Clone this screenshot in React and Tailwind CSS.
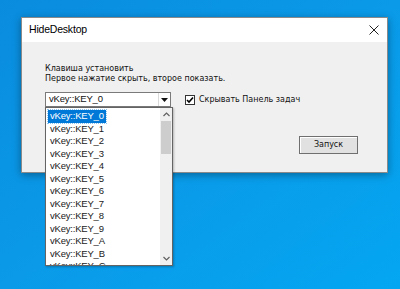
import React from 'react';

const KEYS = ['0', '1', '2', '3', '4', '5', '6', '7', '8', '9', 'A', 'B', 'C'];

function Chevron({ down }) {
  return (
    <svg width="7" height="5" viewBox="0 0 7 5" className={down ? 'rotate-180' : ''}>
      <path d="M0.5 4 L3.5 1 L6.5 4" fill="none" stroke="#606060" strokeWidth="1.2" />
    </svg>
  );
}

function KeyList() {
  return (
    <div className="absolute left-[45px] top-[107px] w-[128px] h-[159px] bg-white border border-[#646464] shadow-[1px_1px_2px_rgba(0,0,0,0.25)] flex overflow-hidden">
      <div className="flex-1 pt-[2px] pl-[2px] overflow-hidden">
        {KEYS.map((k, i) => (
          <div
            key={k}
            className={`h-[12.5px] leading-[12.5px] pl-[2px] text-[9.5px] tracking-[-0.2px] w-max pr-[2px] ${
              i === 0 ? 'bg-[#0078d7] text-white outline-1 outline-dotted outline-[#8cc4f0]' : 'text-[#1a1a1a]'
            }`}
          >
            vKey::KEY_{k}
          </div>
        ))}
      </div>
      <div className="w-[12px] bg-[#f0f0f0] flex flex-col items-center">
        <div className="h-[13px] flex items-center justify-center">
          <Chevron />
        </div>
        <div className="w-[10px] h-[33px] bg-[#cdcdcd]" />
        <div className="flex-1" />
        <div className="h-[13px] flex items-center justify-center">
          <Chevron down />
        </div>
      </div>
    </div>
  );
}

export default function App() {
  return (
    <div
      className="relative w-[400px] h-[289px] overflow-hidden bg-gradient-to-br from-[#0a8cde] via-[#0a9ae8] to-[#04a6f2]"
      style={{ fontFamily: '"Liberation Sans", Arial, sans-serif' }}
    >
      {/* window */}
      <div className="absolute left-[21px] top-[17px] w-[367px] h-[156px] border border-[#8a8a8a] shadow-[0_2px_8px_rgba(0,0,0,0.35)] bg-[#f0f0f0] flex flex-col">
        <div className="h-[24px] bg-white flex items-center justify-between pl-[7px] pr-[7px]">
          <span className="text-[10.5px] tracking-[-0.2px] text-black">HideDesktop</span>
          <svg width="10" height="10" viewBox="0 0 10 10" className="mr-[1px]">
            <path d="M0.5 0.5 L9.5 9.5 M9.5 0.5 L0.5 9.5" stroke="#222" strokeWidth="1" />
          </svg>
        </div>
        <div className="flex-1 flex flex-col pl-[23px] pt-[22px]" style={{ fontFamily: '"DejaVu Sans", Verdana, sans-serif' }}>
          <div className="text-[8px] leading-[10px] text-[#111]">
            <div>Клавиша установить</div>
            <div>Первое нажатие скрыть, второе показать.</div>
          </div>
          <div className="flex items-center mt-[8px]">
            <div className="w-[126px] h-[15px] bg-white border border-[#7a7a7a] flex items-center" style={{ fontFamily: '"Liberation Sans", Arial, sans-serif' }}>
              <span className="flex-1 pl-[3px] text-[9.5px] tracking-[-0.2px] text-[#111]">vKey::KEY_0</span>
              <div className="w-[12px] h-[13px] flex items-center justify-center border-l border-[#dadada]">
                <svg width="7" height="4" viewBox="0 0 7 4">
                  <path d="M0 0 H7 L3.5 4 Z" fill="#111" />
                </svg>
              </div>
            </div>
            <div className="ml-[14px] w-[10px] h-[10px] bg-white border border-[#333] flex items-center justify-center">
              <svg width="8" height="8" viewBox="0 0 8 8">
                <path d="M1 4 L3 6 L7 1.5" fill="none" stroke="#000" strokeWidth="1.6" />
              </svg>
            </div>
            <span className="ml-[4px] text-[8px] text-[#111]">Скрывать Панель задач</span>
          </div>
          <div className="flex justify-end mr-[29px] mt-[29px]">
            <button className="w-[59px] h-[18px] bg-[#e1e1e1] border border-[#6f6f6f] shadow-[inset_1px_1px_0_#fff] text-[8px] text-[#111] flex items-center justify-center">
              Запуск
            </button>
          </div>
        </div>
      </div>
      <KeyList />
    </div>
  );
}
